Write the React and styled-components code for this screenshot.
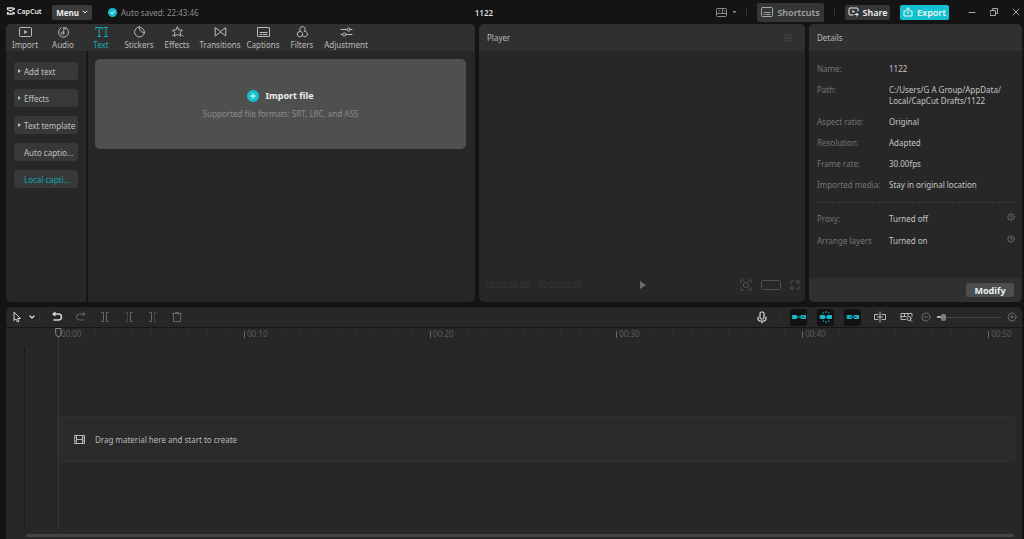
import React, {useState} from 'react';
import styled, {createGlobalStyle} from 'styled-components';

const GlobalStyle = createGlobalStyle`
  * {
    box-sizing: border-box;
  }

  body {
    margin: 0;
    background: #141414;
    color: #c8c8c8;
    font-family: "Noto Sans", "Open Sans", sans-serif;
    font-size: 8px;
    line-height: 11px;
  }

  button, input {
    margin: 0;
    padding: 0;
    border: 0;
    background: none;
    color: inherit;
    font: inherit;
  }

  svg {
    display: block;
    flex: none;
  }
`;

const Page = styled.div`
  display: flex;
  flex-direction: column;
  height: 100vh;
  padding: 0 2px 0 6px;
  overflow: hidden;
`;

const TitleBar = styled.header`
  display: grid;
  grid-template-columns: minmax(0, 468fr) auto minmax(0, 528fr);
  align-items: center;
  height: 24px;
  flex: none;
`;

const BarLeft = styled.div`
  display: flex;
  align-items: center;
`;

const BarRight = styled.div`
  display: flex;
  align-items: center;
  justify-content: flex-end;
`;

const Logo = styled.div`
  display: flex;
  align-items: center;
  gap: 2px;
  width: 46px;
  padding-bottom: 2px;
  color: #e4e4e4;
  font-size: 7px;
  font-weight: 600;
`;

const MenuButton = styled.button`
  display: flex;
  align-items: center;
  justify-content: center;
  gap: 3px;
  width: 40px;
  height: 15px;
  border-radius: 2px;
  background: #3b3b3b;
  color: #f0f0f0;
  font-weight: 700;
`;

const Saved = styled.div`
  display: flex;
  align-items: center;
  gap: 4px;
  margin-left: 16px;
  color: #8c8c8c;
`;

const ProjectTitle = styled.h1`
  margin: 0;
  color: #dedede;
  font-size: 8px;
  line-height: 11px;
  font-weight: 600;
`;

const BarButton = styled.button`
  display: flex;
  align-items: center;
  justify-content: center;
  gap: 4px;
  width: ${(p) => p.$width}px;
  height: ${(p) => (p.$tall ? 19 : 15)}px;
  margin-right: ${(p) => p.$after}px;
  border-radius: 2px;
  background: ${(p) => (p.$primary ? '#13c1d0' : '#353636')};
  color: ${(p) => (p.$tall ? '#a4a4a4' : '#f2f2f2')};
  font-size: 9px;
  font-weight: 600;
`;

const WindowButtons = styled.div`
  display: flex;
  gap: 10px;
  color: #a8a8a8;
`;

const WindowButton = styled.button`
  display: flex;
  justify-content: center;
  width: 12px;
`;

const LayoutButton = styled.button`
  display: flex;
  align-items: center;
  gap: 5px;
  margin-right: 9px;
  color: #8a8a8a;
`;

const Separator = styled.span`
  width: 1px;
  height: 8px;
  margin-right: ${(p) => p.$after || 0}px;
  background: #343434;
`;

const Panels = styled.div`
  display: grid;
  grid-template-columns: minmax(0, 469fr) minmax(0, 326fr) minmax(0, 213fr);
  gap: 4px;
  flex: 278 1 0;
  min-height: 0;
`;

const Panel = styled.section`
  display: flex;
  flex-direction: column;
  min-width: 0;
  border-radius: 5px;
  background: #272727;
  overflow: hidden;
`;

const PanelHeader = styled.div`
  display: flex;
  align-items: center;
  justify-content: space-between;
  height: 27px;
  flex: none;
  padding: 0 12px 0 8px;
  background: #303030;
  color: #bababa;
`;

const Tabs = styled.nav`
  display: flex;
  height: 27px;
  flex: none;
  background: #303030;
`;

const Tab = styled.button`
  display: flex;
  flex-direction: column;
  align-items: center;
  gap: 1px;
  width: ${(p) => p.$width || 38}px;
  padding-top: 2px;
  color: ${(p) => (p.$active ? '#18a9b4' : '#bcbcbc')};
`;

const MediaBody = styled.div`
  display: flex;
  flex: 1;
  min-height: 0;
`;

const Side = styled.div`
  display: flex;
  flex-direction: column;
  gap: 9px;
  width: 82px;
  flex: none;
  padding: 11px 8px;
  border-right: 2px solid #161616;
`;

const SideItem = styled.button`
  display: flex;
  align-items: center;
  height: 18px;
  border-radius: 3px;
  background: #373838;
  color: ${(p) => (p.$active ? '#14a5b0' : '#c0c0c0')};
  white-space: nowrap;
`;

const Arrow = styled.span`
  display: flex;
  width: 10px;
  padding-left: 4px;
`;

const MediaArea = styled.div`
  flex: 1;
  padding: 8px 9px 8px 7px;
`;

const DropCard = styled.button`
  display: flex;
  flex-direction: column;
  align-items: center;
  justify-content: center;
  gap: 6px;
  width: 100%;
  height: 90px;
  border-radius: 5px;
  background: #4e504f;
  color: #8b8c8c;
`;

const ImportLabel = styled.span`
  display: flex;
  align-items: center;
  gap: 6px;
  color: #efefef;
  font-size: 9px;
  font-weight: 700;
`;

const Stage = styled.div`
  flex: 1;
`;

const PlayerControls = styled.div`
  display: grid;
  grid-template-columns: 1fr auto 1fr;
  align-items: center;
  height: 35px;
  padding: 0 5px 0 7px;
  color: #393939;
`;

const Times = styled.div`
  display: flex;
  gap: 9px;
`;

const PlayerButtons = styled.div`
  display: flex;
  align-items: center;
  justify-content: flex-end;
  gap: 9px;
  color: #4f4f4f;
`;

const IconButton = styled.button`
  display: flex;
  align-items: center;
  justify-content: center;
`;

const DetailList = styled.dl`
  display: flex;
  flex-direction: column;
  gap: ${(p) => (p.$loose ? 11 : 10)}px;
  margin: 0 7px 0 8px;
  padding: ${(p) => (p.$loose ? '10px 0' : '12px 0')};
  border-top: ${(p) => (p.$loose ? '1px dashed #3c3c3c' : 'none')};
`;

const DetailRow = styled.div`
  display: grid;
  grid-template-columns: 72px minmax(0, 1fr) auto;
  align-items: start;

  dt {
    color: #737575;
    white-space: nowrap;
  }

  dd {
    margin: 0;
    color: #c4c4c4;
  }
`;

const HelpButton = styled(IconButton)`
  color: #747474;
`;

const PanelFooter = styled.div`
  display: flex;
  align-items: center;
  justify-content: flex-end;
  height: 24px;
  margin-top: auto;
  padding-right: 8px;
  background: #303030;
`;

const ModifyButton = styled.button`
  width: 48px;
  height: 14px;
  border-radius: 2px;
  background: #4d4f4f;
  color: #e8f4f2;
  font-size: 9px;
  font-weight: 700;
`;

const Timeline = styled.section`
  display: flex;
  flex-direction: column;
  flex: 232 1 0;
  min-height: 0;
  margin-top: 5px;
  border-radius: 5px 5px 0 0;
  background: #272727;
`;

const Toolbar = styled.div`
  display: flex;
  align-items: center;
  justify-content: space-between;
  height: 21px;
  flex: none;
  padding: 0 5px 0 4px;
  border-bottom: 1px solid #161616;
`;

const Tools = styled.div`
  display: flex;
  align-items: center;
  gap: ${(p) => p.$gap}px;
`;

const Tool = styled(IconButton)`
  width: ${(p) => (p.$slim ? 11 : 14)}px;
  height: 14px;
  color: ${(p) => (p.$dim ? '#666' : '#d8d8d8')};
`;

const Toggle = styled(IconButton)`
  width: 17px;
  height: 17px;
  border-radius: 3px;
  background: ${(p) => (p.$on ? '#121212' : 'none')};
  color: ${(p) => (p.$on ? '#17bccb' : '#b8b8b8')};
`;

const Zoom = styled.div`
  display: flex;
  align-items: center;
  gap: 6px;
  color: #6c6c6c;
`;

const ZoomSlider = styled.input`
  appearance: none;
  width: 64px;
  height: 8px;
  background:
    linear-gradient(#b0b0b0, #b0b0b0) left center / 5px 2px no-repeat,
    linear-gradient(#454545, #454545) center / 100% 1px no-repeat;

  &::-webkit-slider-thumb {
    appearance: none;
    width: 5px;
    height: 7px;
    border-radius: 2px;
    background: #7d7d7d;
  }
`;

const TimelineBody = styled.div`
  position: relative;
  display: flex;
  flex-direction: column;
  flex: 1;
  min-height: 0;
`;

const Ruler = styled.div`
  display: flex;
  height: 20px;
  flex: none;
  margin-left: 52px;
  overflow: hidden;
`;

const Segment = styled.div`
  display: flex;
  width: 19.3%;
  flex: none;
  color: #5d5d5d;
`;

const Tick = styled.span`
  flex: 1 1 0;
  width: 0;
  white-space: nowrap;

  &::before {
    content: "";
    float: left;
    width: 1px;
    height: ${(p) => (p.$major ? 7 : 2)}px;
    margin-top: ${(p) => (p.$major ? 3 : 4)}px;
    margin-right: 2px;
    background: ${(p) => (p.$major ? '#666' : '#3c3c3c')};
  }
`;

const Tracks = styled.div`
  display: flex;
  align-items: center;
  flex: 1;
  margin-left: 18px;
  padding: 0 7px 0 33px;
  border-left: 1px dotted #111;
`;

const EmptyTrack = styled.div`
  display: flex;
  align-items: center;
  gap: 10px;
  flex: 1;
  height: 46px;
  padding-left: 15px;
  border: 1px solid #313131;
  border-radius: 3px;
  background: #2b2b2b;
  color: #b9b9b9;
`;

const Playhead = styled.div`
  position: absolute;
  top: 0;
  bottom: 9px;
  left: 52px;
  width: 1px;
  background: #3a3a3a;

  svg {
    position: absolute;
    top: 0;
    left: -3px;
  }
`;

const ScrollBar = styled.div`
  height: 3px;
  flex: none;
  margin: 4px 8px 2px 20px;
  border-radius: 2px;
  background: #434444;
`;

const Icon = ({w = 12, h = 12, children, sw = 1}) => (
  <svg
    width={w}
    height={h}
    viewBox={`0 0 ${w} ${h}`}
    fill="none"
    stroke="currentColor"
    strokeWidth={sw}
    strokeLinecap="round"
    strokeLinejoin="round"
    aria-hidden="true"
  >
    {children}
  </svg>
);

const Chevron = ({sw}) => (
  <Icon w={6} h={4} sw={sw}><path d="M1 1l2 2 2-2" /></Icon>
);

const KeyboardIcon = () => (
  <Icon w={12} h={10}>
    <rect x=".5" y=".5" width="11" height="9" rx="1" />
    <path d="M3 5.500h6M3 7.500h1M5.500 7.500h3.500" />
  </Icon>
);

const HelpIcon = () => (
  <Icon w={8} h={8} sw={0.8}>
    <circle cx="4" cy="4" r="3.2" />
    <path d="M3 3.200c.2-1.200 2-1 1.900.1-.1.600-.9.600-.9 1.200M4 5.800v.1" />
  </Icon>
);

const tabs = [
  {name: 'Import', icon: <><rect x=".5" y="1.5" width="12" height="9" rx="1" /><path d="M5.2 4v4L8.600 6z" fill="currentColor" stroke="none" /></>},
  {name: 'Audio', icon: <><path d="M8.300 1.500a5 5 0 1 1-4 .2" /><path d="M6.800 7.300V1.200c.3 1 .9 1.400 1.900 1.600" /><circle cx="5.500" cy="7.200" r="1.300" /></>},
  {name: 'Text', icon: <path d="M.7 3.200V1.500h7v1.700M4.200 1.500v9M2.800 10.500h2.800M9.300 1.500h3.400M11 1.500v9M9.300 10.500h3.400" />},
  {name: 'Stickers', icon: <path d="M6.300 1a5 5 0 1 0 5.200 5.600M6.300 1c-.4 3 1.600 5.400 5.200 5.600C11.200 3.500 9.200 1.500 6.300 1" />},
  {name: 'Effects', icon: <><path d="M6.500 1l1.400 2.900 3.300.3-2.100 2.300.7 3.500-3.300-1.500-3.200 1.700.5-3.600L1.500 4.300l3.400-.5z" /><path d="M10.800 9l1.200 1.200M1.500 9.700l.8-.6" /></>},
  {name: 'Transitions', width: 48, icon: <path d="M1.200 2v8l5.300-4zM11.800 2v8L6.500 6z" />},
  {name: 'Captions', icon: <><rect x=".5" y="1.500" width="12" height="9" rx=".5" /><path d="M3 6.500h7M3 8.500h2M6.500 8.500h3.500" /></>},
  {name: 'Filters', width: 40, icon: <path d="M4.400 5.200a2.800 2.800 0 1 1 4.200 0M6.600 8.500A2.700 2.700 0 1 1 4 5.500c1.500 0 2.700 1.200 2.700 2.700M8.600 5.200a2.800 2.800 0 1 1-2.300 4.300" />},
  {name: 'Adjustment', width: 48, icon: <><path d="M1 3.500h6M10.500 3.500H12M1 8.500h1.500M6 8.500h6" /><circle cx="8.700" cy="3.500" r="1.600" /><circle cx="4.300" cy="8.500" r="1.600" /></>},
];

const sideItems = [
  {name: 'Add text', group: true},
  {name: 'Effects', group: true},
  {name: 'Text template', group: true},
  {name: 'Auto captio...'},
  {name: 'Local capti...'},
];

const details = [
  ['Name:', '1122'],
  ['Path:', <>C:/Users/G A Group/AppData/<br />Local/CapCut Drafts/1122</>],
  ['Aspect ratio:', 'Original'],
  ['Resolution:', 'Adapted'],
  ['Frame rate:', '30.00fps'],
  ['Imported media:', 'Stay in original location'],
];

const options = [
  ['Proxy:', 'Turned off'],
  ['Arrange layers', 'Turned on'],
];

const editTools = [
  {name: 'Split', icon: <path d="M2.500 1.500h2v9h-2M9.500 1.500h-2v9h2" />},
  {name: 'Delete left', icon: <><path d="M2.500 1.500h2v9h-2" opacity=".5" /><path d="M9.500 1.500h-2v9h2" /></>},
  {name: 'Delete right', icon: <><path d="M2.500 1.500h2v9h-2" /><path d="M9.500 1.500h-2v9h2" opacity=".5" /></>},
  {name: 'Delete', icon: <path d="M1.500 2.500h9M2.500 2.500v8h7v-8M4.500 1.500h3" />},
];

const toggles = [
  {
    name: 'Main track magnet',
    on: true,
    icon: <><path d="M.5 4.500h4v3h-4zM9.500 4.500h4v3h-4z" fill="currentColor" /><path d="M4.500 6h5" /><path d="M10.500 6h1.500" stroke="#121212" /></>,
  },
  {
    name: 'Auto snapping',
    on: true,
    icon: <><path d="M1.500 4.500h4v3h-4zM8.500 4.500h4v3h-4z" fill="currentColor" /><path d="M5.500 6h3" /><path d="M7 .5v1M7 10.500v1M4 1.500l.4.800M10 1.500l-.4.800M4 10.500l.4-.8M10 10.500l-.4-.8" /></>,
  },
  {
    name: 'Linkage',
    on: true,
    icon: <><path d="M1.500 4.500h4v3h-4zM8.500 4.500h4v3h-4z" fill="currentColor" /><path d="M4 6h1.500M8.500 6H10" stroke="#121212" /><path d="M6 6h2" /></>,
  },
  {
    name: 'Preview axis',
    icon: <path d="M5 3.500H1.500v5H5M9 3.500h3.500v5H9M7 1v10M4.500 6h5" />,
  },
];

const Title = () => (
  <TitleBar>
    <BarLeft>
      <Logo>
        <Icon w={9} h={8} sw={1.3}>
          <path d="M8.500 1.500L7 1H1.500v1.500L8.500 6M8.500 6.500L7 7H1.500V5.500L8.500 2" />
        </Icon>
        CapCut
      </Logo>
      <MenuButton type="button">Menu <Chevron /></MenuButton>
      <Saved>
        <Icon w={9} h={9}>
          <circle cx="4.500" cy="4.500" r="4.500" fill="#17bdcc" stroke="none" />
          <path d="M2.700 4.600l1.300 1.300 2.300-2.500" stroke="#fff" />
        </Icon>
        Auto saved: 22:43:46
      </Saved>
    </BarLeft>
    <ProjectTitle>1122</ProjectTitle>
    <BarRight>
      <LayoutButton type="button" aria-label="Layout">
        <Icon w={11} h={9}>
          <rect x=".5" y=".5" width="10" height="8" rx="1" />
          <path d="M.5 5.500h10M6.500 .5v5M3 3h1M8.500 3h.5" />
        </Icon>
        <Icon w={5} h={3}><path d="M.5 0h4L2.500 2.500z" fill="currentColor" stroke="none" /></Icon>
      </LayoutButton>
      <Separator $after={10} />
      <BarButton type="button" $tall $width={67} $after={10}><KeyboardIcon />Shortcuts</BarButton>
      <Separator $after={10} />
      <BarButton type="button" $width={45} $after={10}>
        <Icon w={11} h={10}>
          <path d="M10 4V2a1 1 0 0 0-1-1H2a1 1 0 0 0-1 1v5a1 1 0 0 0 1 1h3M7 7.500h3M8.500 6L10 7.500 8.500 9" />
          <path d="M4.500 3v3L7 4.500z" fill="currentColor" stroke="none" />
        </Icon>
        Share
      </BarButton>
      <BarButton type="button" $primary $width={49} $after={17}>
        <Icon w={10} h={10}>
          <path d="M3 4H1v5h8V4H7M5 6.500V1M3.300 2.500L5 .8l1.700 1.700" />
        </Icon>
        Export
      </BarButton>
      <WindowButtons>
        <WindowButton type="button" aria-label="Minimize">
          <Icon w={8} h={8}><path d="M1 4.500h6" /></Icon>
        </WindowButton>
        <WindowButton type="button" aria-label="Restore">
          <Icon w={8} h={8}><path d="M.5 2.500h5v5h-5zM2.500 2.500v-2h5v5h-2" /></Icon>
        </WindowButton>
        <WindowButton type="button" aria-label="Close">
          <Icon w={8} h={8}><path d="M1 1l6 6M7 1L1 7" /></Icon>
        </WindowButton>
      </WindowButtons>
    </BarRight>
  </TitleBar>
);

const Media = () => {
  const [tab, setTab] = useState('Text');
  const [side, setSide] = useState('Local capti...');

  return (
    <Panel>
      <Tabs>
        {tabs.map((t) => (
          <Tab key={t.name} type="button" $width={t.width} $active={t.name === tab} onClick={() => setTab(t.name)}>
            <Icon w={13} h={12}>{t.icon}</Icon>
            <span>{t.name}</span>
          </Tab>
        ))}
      </Tabs>
      <MediaBody>
        <Side>
          {sideItems.map((s) => (
            <SideItem key={s.name} type="button" $active={s.name === side} onClick={() => setSide(s.name)}>
              <Arrow>
                {s.group && <Icon w={3} h={4}><path d="M0 0v4l3-2z" fill="currentColor" stroke="none" /></Icon>}
              </Arrow>
              {s.name}
            </SideItem>
          ))}
        </Side>
        <MediaArea>
          <DropCard type="button">
            <ImportLabel>
              <Icon w={12} h={12}>
                <circle cx="6" cy="6" r="6" fill="#17bdcc" stroke="none" />
                <path d="M3.500 6h5M6 3.500v5" stroke="#e8ffff" />
              </Icon>
              Import file
            </ImportLabel>
            <span>Supported file formats: SRT, LRC, and ASS</span>
          </DropCard>
        </MediaArea>
      </MediaBody>
    </Panel>
  );
};

const Player = () => (
  <Panel>
    <PanelHeader>
      Player
      <IconButton type="button" aria-label="Player menu">
        <Icon w={9} h={8}><path d="M1 1h7M1 4h7M1 7h7" stroke="#484848" /></Icon>
      </IconButton>
    </PanelHeader>
    <Stage />
    <PlayerControls>
      <Times>
        <span>00:00:00:00</span>
        <span>00:00:00:00</span>
      </Times>
      <IconButton type="button" aria-label="Play">
        <Icon w={6} h={8}><path d="M0 0v8l6-4z" fill="#6d6d6d" stroke="none" /></Icon>
      </IconButton>
      <PlayerButtons>
        <IconButton type="button" aria-label="Focus">
          <Icon w={12} h={12}>
            <path d="M1 3.500V1h2.500M8.500 1H11v2.500M11 8.500V11H8.500M3.500 11H1V8.500" />
            <circle cx="6" cy="6" r="2.700" />
          </Icon>
        </IconButton>
        <IconButton type="button" aria-label="Ratio">
          <Icon w={20} h={10}><rect x=".5" y=".5" width="19" height="9" rx="1" /></Icon>
        </IconButton>
        <IconButton type="button" aria-label="Full screen">
          <Icon w={10} h={10}>
            <path d="M1 3.500V1h2.500M6.500 1H9v2.500M9 6.500V9H6.500M3.500 9H1V6.500M9 1L6.500 3.500M1 9l2.500-2.500" />
          </Icon>
        </IconButton>
      </PlayerButtons>
    </PlayerControls>
  </Panel>
);

const Details = () => (
  <Panel>
    <PanelHeader>Details</PanelHeader>
    <DetailList>
      {details.map(([label, value]) => (
        <DetailRow key={label}>
          <dt>{label}</dt>
          <dd>{value}</dd>
        </DetailRow>
      ))}
    </DetailList>
    <DetailList $loose>
      {options.map(([label, value]) => (
        <DetailRow key={label}>
          <dt>{label}</dt>
          <dd>{value}</dd>
          <HelpButton type="button" aria-label={`About ${label}`}><HelpIcon /></HelpButton>
        </DetailRow>
      ))}
    </DetailList>
    <PanelFooter>
      <ModifyButton type="button">Modify</ModifyButton>
    </PanelFooter>
  </Panel>
);

const TimelinePanel = () => {
  const [zoom, setZoom] = useState(6);

  return (
    <Timeline>
      <Toolbar>
        <Tools $gap={10}>
          <Tools $gap={2}>
            <Tool type="button" aria-label="Select">
              <Icon w={12} h={12}><path d="M3 1.500v8l2-1.500 1.500 3 1.500-.8-1.400-2.700H9z" /></Icon>
            </Tool>
            <Tool type="button" aria-label="Select mode" $slim><Chevron sw={1.4} /></Tool>
            <Separator />
          </Tools>
          <Tool type="button" aria-label="Undo">
            <Icon w={12} h={12} sw={1.4}><path d="M2 3h5.500a3 3 0 0 1 0 6H3M4 1.500L2 3l2 1.500" /></Icon>
          </Tool>
          <Tool type="button" aria-label="Redo" $dim>
            <Icon w={12} h={12}><path d="M10 3H4.500a3 3 0 0 0 0 6H9M8 1.500L10 3 8 4.500" /></Icon>
          </Tool>
          {editTools.map((t) => (
            <Tool key={t.name} type="button" aria-label={t.name} $dim>
              <Icon>{t.icon}</Icon>
            </Tool>
          ))}
        </Tools>
        <Tools $gap={10}>
          <Tool type="button" aria-label="Record">
            <Icon w={10} h={13} sw={1.2}>
              <rect x="3" y="1" width="4" height="7" rx="1.500" />
              <path d="M1 6v1.500C1 9 2 10 3.500 10h3C8 10 9 9 9 7.500V6M5 10v2" />
            </Icon>
          </Tool>
          <Separator />
          {toggles.map((t) => (
            <Toggle key={t.name} type="button" aria-label={t.name} $on={t.on}>
              <Icon w={14} h={12}>{t.icon}</Icon>
            </Toggle>
          ))}
          <Zoom>
            <Toggle type="button" aria-label="Timeline preview">
              <Icon w={13} h={12}>
                <path d="M5.500 8.500H1v-6h11v3M1 5.500h5M4.500 2.500v3M8 2.500V5" />
                <circle cx="9" cy="7.500" r="2" />
                <path d="M10.500 9l1.500 1.500" />
              </Icon>
            </Toggle>
            <IconButton type="button" aria-label="Zoom out">
              <Icon w={10} h={10}><circle cx="5" cy="5" r="4" /><path d="M3.500 5h3" /></Icon>
            </IconButton>
            <ZoomSlider
              type="range"
              aria-label="Timeline zoom"
              value={zoom}
              onChange={(e) => setZoom(e.target.value)}
            />
            <IconButton type="button" aria-label="Zoom in">
              <Icon w={10} h={10}><circle cx="5" cy="5" r="4" /><path d="M3.500 5h3M5 3.500v3" /></Icon>
            </IconButton>
          </Zoom>
        </Tools>
      </Toolbar>
      <TimelineBody>
        <Ruler>
          {['00:00', '00:10', '00:20', '00:30', '00:40', '00:50'].map((label) => (
            <Segment key={label}>
              <Tick $major>{label}</Tick>
              {[1, 2, 3, 4, 5, 6, 7, 8, 9].map((n) => <Tick key={n} />)}
            </Segment>
          ))}
        </Ruler>
        <Tracks>
          <EmptyTrack>
            <Icon w={11} h={9}>
              <path d="M.5 .5h10v8H.5zM2.500 .5v8M8.500 .5v8M2.500 4.500h6" />
              <path d="M.5 3h2M.5 6h2M8.500 3h2M8.500 6h2" />
            </Icon>
            Drag material here and start to create
          </EmptyTrack>
        </Tracks>
        <Playhead>
          <Icon w={7} h={9}><path d="M1 .5h5v6L4.500 8.500h-2L1 6.500z" fill="#272727" stroke="#858585" /></Icon>
        </Playhead>
        <ScrollBar />
      </TimelineBody>
    </Timeline>
  );
};

export default function App() {
  return (
    <>
      <GlobalStyle />
      <Page>
        <Title />
        <Panels>
          <Media />
          <Player />
          <Details />
        </Panels>
        <TimelinePanel />
      </Page>
    </>
  );
}
